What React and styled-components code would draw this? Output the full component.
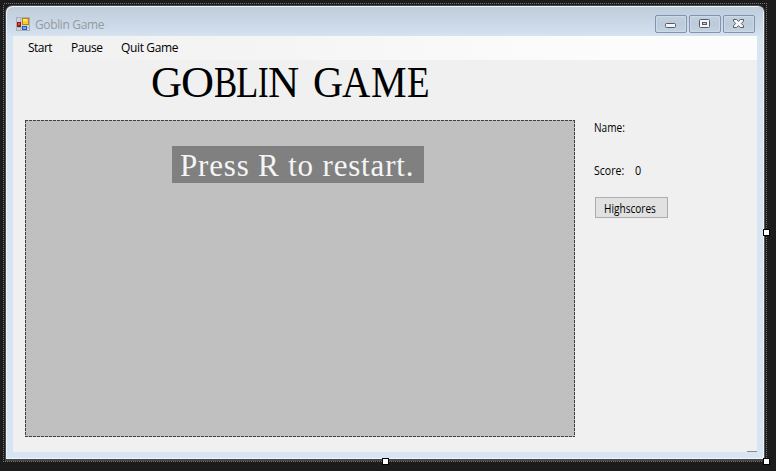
import React from 'react';
import styled, { createGlobalStyle } from 'styled-components';

const GlobalStyle = createGlobalStyle`
  * { box-sizing: border-box; }
  body { margin: 0; background: #1c1c1c; overflow: hidden; }
`;

const Designer = styled.main`
  position: relative;
  width: 776px;
  height: 471px;
  padding: 5px;
  background: #1c1c1c;
  font-family: 'Open Sans', 'Noto Sans', sans-serif;
  color: #000;
`;

const SelectionFrame = styled.svg`
  position: absolute;
  inset: 0;
  pointer-events: none;
`;

const Window = styled.section`
  width: 760px;
  height: 456px;
  display: flex;
  flex-direction: column;
  padding: 0 7px 7px;
  border: 1px solid #47474b;
  border-bottom-width: 2px;
  border-right-color: #55575b;
  border-radius: 7px 7px 0 0;
  background: linear-gradient(#bfcddb 0, #c9d7e6 17px, #d7e4f2 32px);
  box-shadow: inset 1px 1px 0 #eef3f8, inset -1px -1px 0 #eef3f8;
`;

const TitleBar = styled.header`
  height: 30px;
  flex: none;
  display: flex;
  align-items: flex-start;
  padding: 9px 2px 0 3px;
`;

const AppIcon = styled.svg`
  width: 14px;
  height: 14px;
  margin-top: 2px;
  flex: none;
`;

const Label = styled.span`
  display: block;
  flex: none;
  white-space: pre;
  width: ${(p) => p.$w}px;
  font-size: ${(p) => p.$size || 12}px;
  line-height: 16px;
  letter-spacing: ${(p) => p.$track || 0}px;
  color: ${(p) => p.$color || '#000'};
`;

const WindowTitle = styled(Label)`
  margin: 2px auto 0 5px;
`;

const FieldLabel = styled(Label)`
  transform: scaleX(${(p) => p.$stretch || 0.84});
  transform-origin: 0 0;
`;

const Controls = styled.div`
  display: flex;
  gap: 2px;
`;

const ControlButton = styled.button`
  width: 32px;
  height: 18px;
  padding: 0;
  border: 1px solid #8493ad;
  border-radius: 2px;
  background: linear-gradient(#c3d1df, #bccbd9 50%, #c4d3e2);
  box-shadow: inset 0 0 0 1px #cddae7;
  svg { display: block; }
`;

const Client = styled.div`
  flex: 1;
  display: flex;
  flex-direction: column;
  background: #f0f0f0;
`;

const MenuBar = styled.nav`
  height: 24px;
  display: flex;
  padding: 4px 0 0 15px;
  background: linear-gradient(90deg, #f0f0f0, #fcfcfc 80%);
`;

const Heading = styled.h1`
  height: 60px;
  margin: 0;
  padding-left: 138px;
  display: flex;
  font: 400 44px/46px 'Liberation Serif', serif;
`;

const Capital = styled.span`
  width: ${(p) => p.$w}px;
  flex: none;
  white-space: pre;
  transform: scaleX(${(p) => p.$stretch});
  transform-origin: 0 0;
`;

const Content = styled.div`
  display: flex;
  flex: 1;
  padding-left: 12px;
`;

const Playfield = styled.div`
  width: 550px;
  height: 317px;
  padding: 26px 0 0 147px;
  background: repeating-linear-gradient(90deg, #404040 0 3px, #c0c0c0 3px 4px) 0 0 / 100% 1px no-repeat,
    repeating-linear-gradient(90deg, #404040 0 3px, #c0c0c0 3px 4px) 0 100% / 100% 1px no-repeat,
    repeating-linear-gradient(#404040 0 3px, #c0c0c0 3px 4px) 0 0 / 1px 100% no-repeat,
    repeating-linear-gradient(#404040 0 3px, #c0c0c0 3px 4px) 100% 0 / 1px 100% no-repeat, #c0c0c0;
`;

const Message = styled.div`
  width: 252px;
  height: 37px;
  padding-left: 8px;
  background: #808080;
  color: #f5f5f5;
  white-space: pre;
  font: 31px/39px 'Liberation Serif', serif;
  letter-spacing: 0.82px;
`;

const Sidebar = styled.aside`
  width: 182px;
  display: flex;
  flex-direction: column;
  padding-left: 19px;
`;

const Field = styled.div`
  height: ${(p) => p.$h}px;
  display: flex;
`;

const Highscores = styled.button`
  width: 73px;
  height: 21px;
  margin: 0 0 0 1px;
  padding: 2px 0 0 8px;
  border: 1px solid #adadad;
  background: #e1e1e1;
  font-family: inherit;
  text-align: left;
`;

const Grip = styled.div`
  width: 10px;
  height: 1px;
  margin: auto 0 0 auto;
  background: #85898e;
`;

const letters = [
  ['G', 30, 0.98], ['O', 33, 1.04], ['B', 21.5, 0.79], ['L', 22, 0.83],
  ['I', 10.5, 0.72], ['N', 44.5, 0.98], ['G', 29.5, 0.95], ['A', 28.5, 0.89],
  ['M', 36, 0.91], ['E', 21, 0.84],
];

const handles = [[763, 229], [382, 458], [763, 458]];

export default function App() {
  return (
    <>
      <GlobalStyle />
      <Designer>
        <Window>
          <TitleBar>
            <AppIcon viewBox="0 0 14 14" shapeRendering="crispEdges">
              <rect x=".5" y=".5" width="13" height="13" fill="#cbd3dc" stroke="#a7afb7" />
              <path d="M4 0v14M0 10h14" stroke="#b1b9c1" />
              <rect x="6" y="1" width="7" height="7" fill="#b78611" />
              <rect x="7" y="2" width="5" height="5" fill="#fbcb2c" />
              <rect x="7" y="2" width="4" height="2" fill="#ffe67d" />
              <rect x="1" y="5" width="4" height="5" fill="#931b16" />
              <rect x="2" y="6" width="2" height="2" fill="#e34d3d" />
              <rect x="6" y="9" width="5" height="4" fill="#285bb5" />
              <rect x="7" y="10" width="3" height="2" fill="#73a9f6" />
            </AppIcon>
            <WindowTitle $w={90} $color="#969ba1" $track={-0.36}>Goblin Game</WindowTitle>
            <Controls>
              <ControlButton aria-label="Minimize">
                <svg width="30" height="16">
                  <rect x="9.5" y="7.5" width="10" height="4" rx="1" fill="#f5f5f5" stroke="#565a68" />
                </svg>
              </ControlButton>
              <ControlButton aria-label="Maximize">
                <svg width="30" height="16">
                  <rect x="9.5" y="3.5" width="10" height="8" rx="1" fill="#f5f5f5" stroke="#565a68" />
                  <rect x="12.5" y="6.5" width="4" height="2" fill="#c4d2e0" stroke="#565a68" />
                </svg>
              </ControlButton>
              <ControlButton aria-label="Close">
                <svg width="30" height="16">
                  <path d="M9.5 3.5h3.2l1.8 1.9 1.8-1.9h3.2v1.7L17.4 7.5l2.1 2.3v1.7h-3.2l-1.8-1.9-1.8 1.9H9.5V9.8l2.1-2.3-2.1-2.3z" fill="#f8f8f8" stroke="#565a68" />
                </svg>
              </ControlButton>
            </Controls>
          </TitleBar>
          <Client>
            <MenuBar>
              <Label $w={43} $track={-0.55}>Start</Label>
              <Label $w={50} $track={-0.4}>Pause</Label>
              <Label $w={70} $track={-0.36}>Quit Game</Label>
            </MenuBar>
            <Heading>
              {letters.map(([char, width, stretch], i) => (
                <Capital key={i} $w={width} $stretch={stretch}>{char}</Capital>
              ))}
            </Heading>
            <Content>
              <Playfield>
                <Message>Press R to restart.</Message>
              </Playfield>
              <Sidebar>
                <Field $h={43}>
                  <FieldLabel as="label" $w={41} $size={12}>Name:</FieldLabel>
                </Field>
                <Field $h={34}>
                  <FieldLabel $w={41} $size={12} $stretch={0.88}>Score:</FieldLabel>
                  <FieldLabel $w={10} $size={12} $stretch={0.9}>0</FieldLabel>
                </Field>
                <Highscores>
                  <FieldLabel $w={60} $size={12}>Highscores</FieldLabel>
                </Highscores>
                <Grip />
              </Sidebar>
            </Content>
          </Client>
        </Window>
        <SelectionFrame width="776" height="471" shapeRendering="crispEdges">
          <rect x="3.5" y="3.5" width="763" height="458" fill="none" stroke="#77776f" strokeDasharray="1 1" />
          {handles.map(([x, y]) => (
            <rect key={`${x}-${y}`} x={x + 0.5} y={y + 0.5} width="6" height="6" fill="#fff" stroke="#000" />
          ))}
        </SelectionFrame>
      </Designer>
    </>
  );
}
